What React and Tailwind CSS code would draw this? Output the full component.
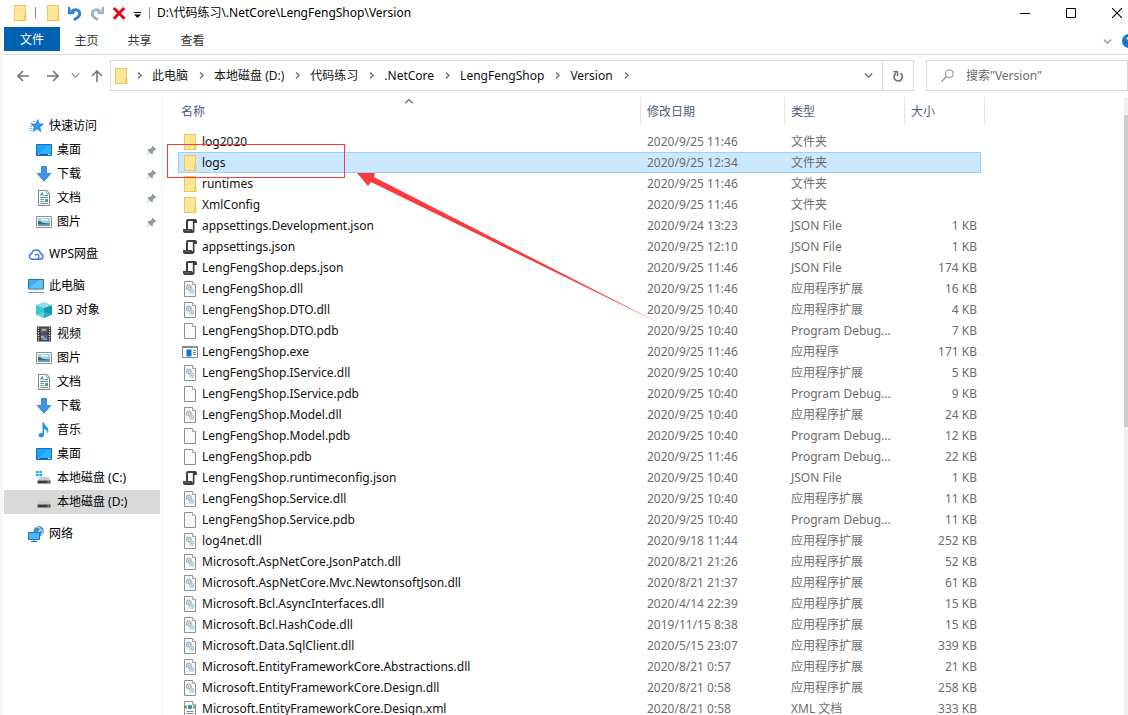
import React from 'react'

/* ---------- icons ---------- */

const FolderIcon = () => (
  <svg viewBox="0 0 16 16" className="size-4 shrink-0" aria-hidden="true">
    <rect x="2" y="0" width="12" height="16" fill="#e9c04f" />
    <rect x="2.8" y="0.8" width="10.4" height="14.4" fill="#ffe596" />
    <path d="M12 10.5h2.5V16H12z" fill="#e9c04f" />
    <path d="M12.8 11.3h1v4h-1z" fill="#fbe08a" />
  </svg>
)

const JsonIcon = () => (
  <svg viewBox="0 0 16 16" className="size-4 shrink-0" aria-hidden="true">
    <path d="M4 11V3Q4 1 6 1H13Q15 1 15 3V5H12.500V13Q12.500 15 10.500 15H3Q1 15 1 13V11Z" fill="#3f3f3f" />
    <path d="M6 3H10.800V12.500L9.500 11H6Z" fill="#fff" />
    <path d="M2.500 12.500H8.500" stroke="#6a6a6a" strokeWidth=".8" />
  </svg>
)

const Page = ({ children }) => (
  <svg viewBox="0 0 16 16" className="size-4 shrink-0" aria-hidden="true">
    <path d="M2.5.5h8L13.5 3.5V15.5H2.5Z" fill="#f9f9f9" stroke="#8f8f8f" />
    <path d="M10.5.5V3.5H13.5" fill="#fff" stroke="#8f8f8f" strokeWidth=".8" />
    {children}
  </svg>
)

const PdbIcon = () => <Page />

const DllIcon = () => (
  <Page>
    <circle cx="6.8" cy="6.5" r="2.3" fill="#e4e8ea" stroke="#8b979e" strokeWidth="1.3" strokeDasharray="1.1 .5" />
    <circle cx="6.8" cy="6.5" r=".8" fill="#9aa5ab" />
    <circle cx="9.6" cy="10.3" r="2" fill="#e2f0f8" stroke="#8bb9d6" strokeWidth="1.2" strokeDasharray="1 .5" />
    <circle cx="9.6" cy="10.3" r=".7" fill="#7fb2d2" />
  </Page>
)

const ExeIcon = () => (
  <svg viewBox="0 0 16 16" className="size-4 shrink-0" aria-hidden="true">
    <path d="M.5 2.5h15v11H.5z" fill="#fff" stroke="#858585" />
    <path d="M0 2h16v2H0z" fill="#858585" />
    <path d="M4.5 5.5h5v7h-5z" fill="#0078d7" />
    <path d="M11 6.5h3M11 8.5h3M11 10.5h3" stroke="#858585" />
    <path d="M11 3h1M13 3h1" stroke="#fff" strokeWidth=".8" />
  </svg>
)

const XmlIcon = () => (
  <Page>
    <path d="M4.6 4.5 3.2 6l1.4 1.5M11.4 4.5 12.8 6l-1.4 1.5" fill="none" stroke="#707070" strokeWidth="1.1" />
    <circle cx="8" cy="6" r="2.3" fill="#2496b5" />
    <path d="M7 4.5q1.5.5.5 1.8l1.5 1" stroke="#2fae6b" fill="none" />
    <path d="M4.5 10.5h7M4.5 12.5h7" stroke="#8f8f8f" />
  </Page>
)

const FILE_ICONS = { folder: FolderIcon, json: JsonIcon, dll: DllIcon, pdb: PdbIcon, exe: ExeIcon, xml: XmlIcon }

const StarIcon = () => (
  <svg viewBox="0 0 16 16" className="size-4 shrink-0" aria-hidden="true">
    <path d="m9.8 1.5 1.400 4.300 4.300.3-3.600 2.800 1 4.800-3.900-2.700-4.200 2.500 1.500-4.600L3 6h4.900Z" fill="#2d9cec" stroke="#1673b8" strokeWidth=".6" />
    <path d="M4.500 3.500h3M2.500 5.200H5M4 8.400H1.800M4.400 10.400H1M3.500 12.500H.8" stroke="#63b4ec" strokeWidth=".9" />
  </svg>
)

const DesktopIcon = () => (
  <svg viewBox="0 0 16 16" className="size-4 shrink-0" aria-hidden="true">
    <path d="M.5 2.5h15v11H.5z" fill="#1ba4fb" stroke="#0b72bd" />
    <path d="M1 13 13 3h2v10z" fill="#46b6ff" opacity=".6" />
    <path d="M1 12.5h14" stroke="#0a5c9c" />
    <path d="M2 12.5h1M12 12.5h1M13.5 12.5h1" stroke="#fff" />
  </svg>
)

const DownloadIcon = () => (
  <svg viewBox="0 0 16 16" className="size-4 shrink-0" aria-hidden="true">
    <path d="M5.5.5h5v7h4.300L8 15.300 1.200 7.500h4.300Z" fill="#3b94e4" stroke="#2b78c4" strokeWidth=".8" />
  </svg>
)

const DocIcon = () => (
  <svg viewBox="0 0 16 16" className="size-4 shrink-0" aria-hidden="true">
    <path d="M2.5.5H11L13.5 3.300V15.500h-11Z" fill="#fff" stroke="#858585" />
    <path d="M10.700.5v3h3" fill="none" stroke="#858585" strokeWidth=".8" />
    <path d="M4.500 5.500 6 3l1.500 3M8.500 5.500H12M4.500 7.500H12" fill="none" stroke="#3b94c8" strokeWidth="1.100" />
    <path d="M4.500 9.500H8M4.500 11.500H8M4.500 13.500H12" stroke="#7b8a94" />
    <path d="M9 9h3v3H9z" fill="#4a9b86" />
  </svg>
)

const PictureIcon = () => (
  <svg viewBox="0 0 16 16" className="size-4 shrink-0" aria-hidden="true">
    <path d="M.5 2.5h15v11H.5z" fill="#fff" stroke="#8e8e8e" />
    <path d="M2 4h12v8H2z" fill="#9ccdf3" />
    <path d="M5 5h7v1.500H5z" fill="#e9f5fd" />
    <path d="M2 7q3 0 5 2l7 .5V10H2z" fill="#35685a" />
    <path d="M2 10h12v2H2z" fill="#5c9bbd" />
  </svg>
)

const CloudIcon = () => (
  <svg viewBox="0 0 16 16" className="size-4 shrink-0" aria-hidden="true">
    <path d="M4 13.300A2.900 2.900 0 0 1 3.700 7.600 4.500 4.500 0 0 1 12.500 7.400 3 3 0 0 1 12.300 13.300Z" fill="none" stroke="#3b7be8" strokeWidth="1.500" />
    <path d="M7 9.300C8.800 7.700 11.300 8.800 10.900 10.800 10.700 11.800 9.800 12 10 13.200" fill="none" stroke="#3b7be8" strokeWidth="1.300" />
  </svg>
)

const PcIcon = () => (
  <svg viewBox="0 0 16 16" className="size-4 shrink-0" aria-hidden="true">
    <path d="M.5 1.500h15v9.500H.5z" fill="#3cb0fa" stroke="#3d6f92" />
    <path d="M1 10.500 11 2h4v8.500z" fill="#7fd0ff" opacity=".6" />
    <path d="M5 12h6v1H5z" fill="#d5dde2" />
    <path d="M0 14.500h16" stroke="#7c93a3" />
  </svg>
)

const CubeIcon = () => (
  <svg viewBox="0 0 16 16" className="size-4 shrink-0" aria-hidden="true">
    <path d="M0 3 8 0 16 3 8 6Z" fill="#8fdfe9" />
    <path d="M0 3 8 6V16L0 12.500Z" fill="#3cc3d6" />
    <path d="M16 3 8 6V16l8-3.500Z" fill="#1797b5" />
    <path d="M0 12.500 8 9.500V16Z" fill="#5dd3e0" />
    <path d="M16 12.500 8 9.500V16Z" fill="#2bb0c8" />
  </svg>
)

const VideoIcon = () => (
  <svg viewBox="0 0 16 16" className="size-4 shrink-0" aria-hidden="true">
    <path d="M1 .5h14v15H1z" fill="#39342f" />
    <path d="M2.500 1.500v13M13.500 1.500v13" stroke="#fff" strokeWidth="1.300" strokeDasharray="1.200 1.200" />
    <path d="M4.500 1.500h7v6h-7z" fill="#3f68b5" />
    <path d="M4.500 8.500h7v6h-7z" fill="#3f68b5" />
    <path d="M6 3h4v2H6z" fill="#e0a62f" />
    <path d="M7 5h4v2H7z" fill="#a63322" />
    <path d="M5 10h3v2H5z" fill="#e0a62f" />
    <path d="M7 12h4v2H7z" fill="#5fa8d8" />
  </svg>
)

const MusicIcon = () => (
  <svg viewBox="0 0 16 16" className="size-4 shrink-0" aria-hidden="true">
    <path d="M6.500.5H8C8.500 4 13 5 12.300 9.500q-.3 1.200-1 1.800C11.600 8.500 9.500 7.200 8 7v6c0 1.500-1.500 2.500-3 2.500S2.500 14.500 2.500 13.300c0-1.500 2-2.600 4-2.100Z" fill="#1893ea" />
  </svg>
)

const DriveIcon = ({ system }) => (
  <svg viewBox="0 0 16 16" className="size-4 shrink-0" aria-hidden="true">
    {system && <path d="M0 1h2.700v2.300H0zM3.400 1h2.700v2.300H3.400zM0 4h2.700v2.300H0zM3.400 4h2.700v2.300H3.400z" fill="#18b4e8" />}
    <path d="M3.500 7h9l2 3.500H1.500Z" fill="#c9cdd0" />
    <path d="M1.500 10.500h13v3h-13z" fill="#3c4043" />
    <path d="M11.500 12h1.800" stroke="#4fe36a" strokeWidth="1.200" />
  </svg>
)

const NetworkIcon = () => (
  <svg viewBox="0 0 16 16" className="size-4 shrink-0" aria-hidden="true">
    <circle cx="10.800" cy="5.200" r="5.200" fill="#4c8fbd" />
    <path d="M8 1.500q3-1 4 1T10 6M12 4.500q3-1 3 1.500T12.500 9" fill="none" stroke="#b7dcef" strokeWidth="1.200" />
    <path d="M.5 6.500h11v7H.5z" fill="#4ab8fb" stroke="#2077b4" />
    <path d="M3 15.500h6M6 14v1.500" stroke="#2077b4" />
  </svg>
)

const PinIcon = () => (
  <svg viewBox="0 0 11 11" className="size-[11px] shrink-0" aria-hidden="true">
    <path d="M6.500.8 10.300 4.500 9.300 5.300 8.500 5 6.800 7 7 8.800 6 9.500 3.700 7.300.8 10.300.4 9.900 3.300 6.900 1.300 4.700 2.200 3.900 4.200 4 6 2.300 5.700 1.600Z" fill="#8b98a1" />
  </svg>
)

const Chevron = ({ dir = 'right', className = '' }) => {
  const d = { right: 'M3 1.500 6 4.500 3 7.500', down: 'M.8 2.500 4.500 6.200 8.200 2.500', up: 'M.8 6.200 4.500 2.500 8.200 6.200' }[dir]
  return (
    <svg viewBox="0 0 9 9" className={'size-[9px] shrink-0 ' + className} aria-hidden="true">
      <path d={d} fill="none" stroke="currentColor" strokeWidth="1.400" />
    </svg>
  )
}

const Arrow = ({ d }) => (
  <svg viewBox="0 0 12 12" className="size-3" aria-hidden="true">
    <path d={d} fill="none" stroke="currentColor" strokeWidth="1.600" />
  </svg>
)

const TurnIcon = ({ className }) => (
  <svg viewBox="0 0 16 16" className={'size-4 ' + className} aria-hidden="true">
    <path d="M4.500 6.500C7.500 3.600 12.700 4.200 12.700 8.700 12.700 11.500 10.500 12.800 7 14.800" fill="none" stroke="currentColor" strokeWidth="2.900" />
    <path d="M1 1.500 3.500 2.500V6.500H8.500L6.500 9.300H1Z" fill="currentColor" />
  </svg>
)

/* ---------- data ---------- */

const FILES = [
  ['folder', 'log2020', '2020/9/25 11:46', '文件夹', ''],
  ['folder', 'logs', '2020/9/25 12:34', '文件夹', ''],
  ['folder', 'runtimes', '2020/9/25 11:46', '文件夹', ''],
  ['folder', 'XmlConfig', '2020/9/25 11:46', '文件夹', ''],
  ['json', 'appsettings.Development.json', '2020/9/24 13:23', 'JSON File', '1 KB'],
  ['json', 'appsettings.json', '2020/9/25 12:10', 'JSON File', '1 KB'],
  ['json', 'LengFengShop.deps.json', '2020/9/25 11:46', 'JSON File', '174 KB'],
  ['dll', 'LengFengShop.dll', '2020/9/25 11:46', '应用程序扩展', '16 KB'],
  ['dll', 'LengFengShop.DTO.dll', '2020/9/25 10:40', '应用程序扩展', '4 KB'],
  ['pdb', 'LengFengShop.DTO.pdb', '2020/9/25 10:40', 'Program Debug...', '7 KB'],
  ['exe', 'LengFengShop.exe', '2020/9/25 11:46', '应用程序', '171 KB'],
  ['dll', 'LengFengShop.IService.dll', '2020/9/25 10:40', '应用程序扩展', '5 KB'],
  ['pdb', 'LengFengShop.IService.pdb', '2020/9/25 10:40', 'Program Debug...', '9 KB'],
  ['dll', 'LengFengShop.Model.dll', '2020/9/25 10:40', '应用程序扩展', '24 KB'],
  ['pdb', 'LengFengShop.Model.pdb', '2020/9/25 10:40', 'Program Debug...', '12 KB'],
  ['pdb', 'LengFengShop.pdb', '2020/9/25 11:46', 'Program Debug...', '22 KB'],
  ['json', 'LengFengShop.runtimeconfig.json', '2020/9/25 10:40', 'JSON File', '1 KB'],
  ['dll', 'LengFengShop.Service.dll', '2020/9/25 10:40', '应用程序扩展', '11 KB'],
  ['pdb', 'LengFengShop.Service.pdb', '2020/9/25 10:40', 'Program Debug...', '11 KB'],
  ['dll', 'log4net.dll', '2020/9/18 11:44', '应用程序扩展', '252 KB'],
  ['dll', 'Microsoft.AspNetCore.JsonPatch.dll', '2020/8/21 21:26', '应用程序扩展', '52 KB'],
  ['dll', 'Microsoft.AspNetCore.Mvc.NewtonsoftJson.dll', '2020/8/21 21:37', '应用程序扩展', '61 KB'],
  ['dll', 'Microsoft.Bcl.AsyncInterfaces.dll', '2020/4/14 22:39', '应用程序扩展', '15 KB'],
  ['dll', 'Microsoft.Bcl.HashCode.dll', '2019/11/15 8:38', '应用程序扩展', '15 KB'],
  ['dll', 'Microsoft.Data.SqlClient.dll', '2020/5/15 23:07', '应用程序扩展', '339 KB'],
  ['dll', 'Microsoft.EntityFrameworkCore.Abstractions.dll', '2020/8/21 0:57', '应用程序扩展', '21 KB'],
  ['dll', 'Microsoft.EntityFrameworkCore.Design.dll', '2020/8/21 0:58', '应用程序扩展', '258 KB'],
  ['xml', 'Microsoft.EntityFrameworkCore.Design.xml', '2020/8/21 0:58', 'XML 文档', '333 KB'],
]

const TREE = [
  {
    label: '快速访问', icon: <StarIcon />, children: [
      { label: '桌面', icon: <DesktopIcon />, pinned: true },
      { label: '下载', icon: <DownloadIcon />, pinned: true },
      { label: '文档', icon: <DocIcon />, pinned: true },
      { label: '图片', icon: <PictureIcon />, pinned: true },
    ],
  },
  { label: 'WPS网盘', icon: <CloudIcon />, children: [] },
  {
    label: '此电脑', icon: <PcIcon />, children: [
      { label: '3D 对象', icon: <CubeIcon /> },
      { label: '视频', icon: <VideoIcon /> },
      { label: '图片', icon: <PictureIcon /> },
      { label: '文档', icon: <DocIcon /> },
      { label: '下载', icon: <DownloadIcon /> },
      { label: '音乐', icon: <MusicIcon /> },
      { label: '桌面', icon: <DesktopIcon /> },
      { label: '本地磁盘 (C:)', icon: <DriveIcon system /> },
      { label: '本地磁盘 (D:)', icon: <DriveIcon />, selected: true },
    ],
  },
  { label: '网络', icon: <NetworkIcon />, children: [] },
]

const CRUMBS = ['此电脑', '本地磁盘 (D:)', '代码练习', '.NetCore', 'LengFengShop', 'Version']

/* ---------- sections ---------- */

function TitleBar() {
  return (
    <header className="flex h-[27px] shrink-0 items-center pl-3 pb-0.5">
      <FolderIcon />
      <span className="ml-[7px] h-3 w-px bg-[#8a8a8a]" />
      <div className="ml-[9px] flex items-center gap-1.5">
        <button type="button" aria-label="属性"><FolderIcon /></button>
        <button type="button" aria-label="撤消"><TurnIcon className="text-[#2a80d2]" /></button>
        <button type="button" aria-label="恢复"><TurnIcon className="-scale-x-100 text-[#a3b1c8]" /></button>
        <button type="button" aria-label="删除">
          <svg viewBox="0 0 16 16" className="size-4" aria-hidden="true">
            <path d="M2.800 3 13.500 13.700M13.200 3 2.800 13.700" fill="none" stroke="#e00b1c" strokeWidth="3" />
          </svg>
        </button>
        <button type="button" aria-label="自定义快速访问工具栏">
          <svg viewBox="0 0 10 16" className="h-4 w-2.5" aria-hidden="true">
            <path d="M1 7.500h7" stroke="#000" />
            <path d="M1 9.500h7L4.500 13Z" fill="#000" />
          </svg>
        </button>
        <span className="h-3 w-px bg-[#8a8a8a]" />
      </div>
      <h1 className="ml-[7px] flex-1 truncate">D:\代码练习\.NetCore\LengFengShop\Version</h1>
      <div className="flex gap-9 pr-1.5">
        <button type="button" aria-label="最小化">
          <svg viewBox="0 0 10 10" className="size-2.5" aria-hidden="true"><path d="M0 5.500h10" stroke="#000" /></svg>
        </button>
        <button type="button" aria-label="最大化">
          <svg viewBox="0 0 10 10" className="size-2.5" aria-hidden="true"><path d="M.5.5h9v9h-9z" fill="none" stroke="#000" /></svg>
        </button>
        <button type="button" aria-label="关闭">
          <svg viewBox="0 0 10 10" className="size-2.5" aria-hidden="true"><path d="m0 0 10 10M10 0 0 10" stroke="#000" strokeWidth="1.100" /></svg>
        </button>
      </div>
    </header>
  )
}

function RibbonTabs() {
  return (
    <div className="flex h-7 shrink-0 items-start border-b border-[#dadada]">
      <button type="button" className="h-6 w-14 bg-[#0063b1] pt-0.5 text-white">文件</button>
      {['主页', '共享', '查看'].map((t) => (
        <button key={t} type="button" className="h-6 w-[53px] pt-1 text-[#333]">{t}</button>
      ))}
      <div className="ml-auto flex h-7 items-center gap-2.5 overflow-hidden">
        <button type="button" aria-label="展开功能区" className="text-[#9a9a9a]"><Chevron dir="down" /></button>
        <button type="button" aria-label="帮助" className="w-1.5 overflow-hidden">
          <svg viewBox="0 0 14 14" className="size-3.5" aria-hidden="true">
            <circle cx="7" cy="7" r="7" fill="#0f78d4" />
            <path d="M5 5.500Q5 3.500 7 3.500t2 2Q9 6.500 7 7.500V9M7 10v1.500" fill="none" stroke="#fff" strokeWidth="1.300" />
          </svg>
        </button>
      </div>
    </div>
  )
}

function AddressRow() {
  return (
    <div className="flex shrink-0 pt-[5px] pb-1.5">
      <div className="flex h-[31px] w-[106px] items-center pl-[13px] text-[#757575]">
        <button type="button" aria-label="后退"><Arrow d="M12 6H1M6 1 1 6l5 5" /></button>
        <button type="button" aria-label="前进" className="ml-[18px]"><Arrow d="M0 6h11M6 1l5 5-5 5" /></button>
        <button type="button" aria-label="最近位置" className="ml-3 text-[#9a9a9a]"><Chevron dir="down" /></button>
        <button type="button" aria-label="上移" className="ml-[11px]"><Arrow d="M6 12V1M1 6l5-5 5 5" /></button>
      </div>
      <div className="flex h-[31px] min-w-0 flex-1 items-center border border-[#d9d9d9]">
        <nav aria-label="路径" className="flex min-w-0 flex-1 items-center gap-2 pl-0.5 whitespace-nowrap">
          <FolderIcon />
          <Chevron className="-ml-0.5 text-[#6f6f6f]" />
          {CRUMBS.map((c) => (
            <React.Fragment key={c}>
              <a href="#" className="pr-px text-[#111]">{c}</a>
              <Chevron className="text-[#6f6f6f]" />
            </React.Fragment>
          ))}
        </nav>
        <button type="button" aria-label="历史记录" className="flex w-7 items-center justify-center text-[#6f6f6f]"><Chevron dir="down" /></button>
        <button type="button" aria-label="刷新" className="flex h-full w-[31px] items-center justify-center border-l border-[#d9d9d9]">
          <svg viewBox="0 0 12 12" className="size-3" aria-hidden="true">
            <path d="M4 3.200A4.200 4.200 0 1 0 8.500 3.300" fill="none" stroke="#707070" strokeWidth="1.700" />
            <path d="M1.500 1.700H5.500V6" fill="none" stroke="#707070" strokeWidth="1.500" />
          </svg>
        </button>
      </div>
      <label className="ml-3 flex h-[31px] w-[202px] items-center gap-3 border border-[#d9d9d9] pl-3.5">
        <svg viewBox="0 0 13 13" className="size-[13px] shrink-0" aria-hidden="true">
          <circle cx="8.300" cy="4.700" r="3.900" fill="none" stroke="#8c8c8c" />
          <path d="M5.500 7.500.5 12.500" stroke="#8c8c8c" strokeWidth="1.200" />
        </svg>
        <input type="search" aria-label="搜索" placeholder='搜索"Version"' className="min-w-0 flex-1 bg-transparent outline-none placeholder:text-[#6d6d6d]" />
      </label>
    </div>
  )
}

function TreeItem({ label, icon, pinned, selected, nested }) {
  return (
    <a
      href="#"
      aria-current={selected ? 'page' : undefined}
      className={
        'mr-0.5 flex h-6 items-center gap-[5px] text-black ' +
        (nested ? 'pl-8 ' : 'pl-6 ') +
        (selected ? 'bg-[#d9d9d9]' : '')
      }
    >
      {icon}
      <span className="flex-1">{label}</span>
      {pinned && <span className="mr-[3px]"><PinIcon /></span>}
    </a>
  )
}

function Sidebar() {
  return (
    <nav aria-label="导航窗格" className="w-[159px] shrink-0 border-r border-[#f0f0f0] pt-[17px]">
      <ul className="flex flex-col gap-2">
        {TREE.map((g) => (
          <li key={g.label}>
            <TreeItem {...g} />
            {g.children.length > 0 && (
              <ul>
                {g.children.map((c) => (
                  <li key={c.label}><TreeItem {...c} nested /></li>
                ))}
              </ul>
            )}
          </li>
        ))}
      </ul>
    </nav>
  )
}

function FileTable() {
  return (
    <table className="w-[803px] table-fixed border-collapse text-[#6d6d6d]">
      <colgroup>
        <col className="w-[463px]" />
        <col className="w-36" />
        <col className="w-[120px]" />
        <col className="w-[76px]" />
      </colgroup>
      <thead>
        <tr className="h-[34px] text-left align-top text-[#4c607a]">
          <th className="p-0 font-normal" aria-sort="ascending">
            <div className="relative flex h-7 items-center border-r border-[#e5e5e5] pt-0.5 pl-[3px]">
              名称
              <Chevron dir="up" className="absolute top-0 left-1/2 -translate-x-1/2 text-[#777]" />
            </div>
          </th>
          <th className="p-0 font-normal">
            <div className="flex h-7 items-center border-r border-[#e5e5e5] pt-0.5 pl-1.5">修改日期</div>
          </th>
          <th className="p-0 font-normal">
            <div className="flex h-7 items-center border-r border-[#e5e5e5] pt-0.5 pl-1.5">类型</div>
          </th>
          <th className="p-0 font-normal">
            <div className="-mr-1 flex h-7 items-center border-r border-[#e5e5e5] pt-0.5 pl-1.5">大小</div>
          </th>
        </tr>
      </thead>
      <tbody>
        {FILES.map(([kind, name, date, type, size]) => {
          const Icon = FILE_ICONS[kind]
          const selected = name === 'logs'
          return (
            <tr
              key={name}
              aria-selected={selected}
              className={'h-[21px] ' + (selected ? 'bg-[#cce8ff] outline outline-1 -outline-offset-1 outline-[#99d1ff]' : '')}
            >
              <td className="p-0">
                <div className="flex items-center gap-1 pl-1 text-[#111]"><Icon />{name}</div>
              </td>
              <td className="p-0 pl-1.5">{date}</td>
              <td className="p-0 pl-1.5">{type}</td>
              <td className="p-0 pr-1 text-right">{size}</td>
            </tr>
          )
        })}
      </tbody>
    </table>
  )
}

export default function App() {
  return (
    <div className="flex h-screen flex-col overflow-hidden bg-white font-['Noto_Sans','Noto_Sans_CJK_SC',sans-serif] text-xs leading-5 text-black">
      <TitleBar />
      <div className="flex min-h-0 flex-1">
        <div className="mr-px w-[3px] shrink-0 bg-[#f7f7f7]" />
        <div className="flex min-w-0 flex-1 flex-col">
          <RibbonTabs />
          <AddressRow />
          <div className="flex min-h-0 flex-1">
            <Sidebar />
            <main className="relative min-w-0 flex-1 overflow-hidden pl-[15px]">
              <FileTable />
              <div className="absolute top-[47px] left-1 h-[34px] w-[178px] border border-[#fb3b3b]" />
              <svg viewBox="0 0 303 151" className="absolute top-[76px] left-[194px] h-[151px] w-[303px]" aria-hidden="true">
                <path d="M0 0H18L17 4 302 150 14 9 11 13Z" fill="#fb3b3b" />
              </svg>
            </main>
            <div className="w-1 shrink-0 bg-[#f0f0f0] pt-[18px]">
              <div className="h-[52%] bg-[#cdcdcd]" />
            </div>
          </div>
        </div>
      </div>
    </div>
  )
}
